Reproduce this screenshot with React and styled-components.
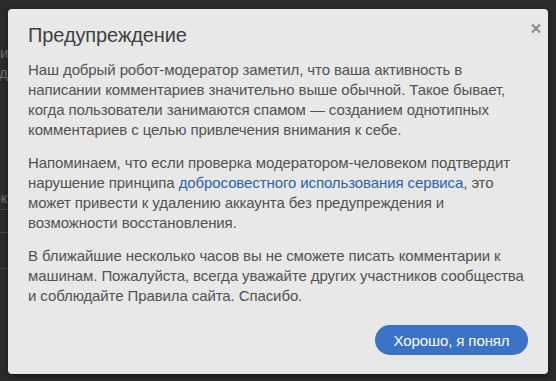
import React from 'react'
import styled, { createGlobalStyle } from 'styled-components'

const GlobalStyle = createGlobalStyle`
    html, body {
        margin: 0;
        padding: 0;
        width: 556px;
        height: 381px;
        overflow: hidden;
        background: #2b2b2b;
        font-family: 'Liberation Sans', Arial, sans-serif;
    }
`;

const Page = styled.div`
    position: relative;
    width: 556px;
    height: 381px;
`;

const Behind = styled.div`
    display: flex;
    flex-direction: column;
    width: 40px;
    margin-left: -24px;
    padding-top: 43px;
`;

const BgText = styled.div`
    margin-top: ${p => p.$gap || 0}px;
    height: 20px;
    line-height: 20px;
    font-size: 15px;
    color: #707070;
    white-space: nowrap;
    text-align: right;
    overflow: hidden;
    direction: rtl;
`;

const BgRule = styled.div`
    margin-top: ${p => p.$gap || 0}px;
    height: 1px;
    background: #474747;
`;

const Overlay = styled.div`
    position: absolute;
    inset: 0;
    display: flex;
    align-items: flex-start;
    padding: 9px 8px 0 8px;
`;

const Modal = styled.div`
    position: relative;
    width: 540px;
    box-sizing: border-box;
    padding: 14px 18px 19px 20px;
    background: #e8e8e8;
    border-radius: 4px;
    box-shadow: 0 2px 6px rgba(0, 0, 0, 0.45);
    display: flex;
    flex-direction: column;
`;

const Close = styled.button`
    position: absolute;
    top: 12px;
    right: 4px;
    width: 16px;
    height: 14px;
    padding: 0;
    border: none;
    background: none;
    display: flex;
    align-items: center;
    justify-content: center;
    cursor: pointer;
`;

const Title = styled.h2`
    margin: 0 0 13px 0;
    font-size: 20px;
    line-height: 24px;
    font-weight: normal;
    letter-spacing: -0.1px;
    color: #3f3f3f;
`;

const Text = styled.p`
    margin: 0 0 13px 0;
    font-size: 15px;
    line-height: 20px;
    letter-spacing: -0.1px;
    color: #525252;

    &:last-of-type {
        margin-bottom: 19px;
    }
`;

const Link = styled.a`
    color: #2f62ad;
    text-decoration: none;
`;

const Footer = styled.div`
    display: flex;
    justify-content: flex-end;
    padding-right: 2px;
`;

const Button = styled.button`
    height: 30px;
    width: 153px;
    padding: 0;
    border: none;
    border-radius: 15px;
    background: #3a72c6;
    color: #ffffff;
    font-family: 'Liberation Sans', Arial, sans-serif;
    font-size: 15px;
    letter-spacing: -0.1px;
    cursor: pointer;
`;

const CloseIcon = () => (
    <svg width="10" height="9" viewBox="0 0 10 9">
        <path d="M1 0.5 L9 8.5 M9 0.5 L1 8.5" stroke="#8c8c8c" strokeWidth="2.2" />
    </svg>
)

const App = () => {
  return (
    <Page>
        <GlobalStyle />
        <Behind>
            <BgText>Сообщения ис</BgText>
            <BgText>и да</BgText>
            <BgText $gap={70}>к</BgText>
            <BgText $gap={15}>Марка</BgText>
            <BgRule $gap={1} />
            <BgRule $gap={22} />
            <BgRule $gap={35} />
            <BgText $gap={22}>н</BgText>
        </Behind>
        <Overlay>
            <Modal>
                <Close aria-label="Закрыть"><CloseIcon /></Close>
                <Title>Предупреждение</Title>
                <Text>
                    Наш добрый робот-модератор заметил, что ваша активность в написании комментариев значительно выше обычной. Такое бывает, когда пользователи занимаются спамом — созданием однотипных комментариев с целью привлечения внимания к себе.
                </Text>
                <Text>
                    Напоминаем, что если проверка модератором-человеком подтвердит нарушение принципа <Link href="#">добросовестного использования сервиса</Link>, это может привести к удалению аккаунта без предупреждения и возможности восстановления.
                </Text>
                <Text>
                    В ближайшие несколько часов вы не сможете писать комментарии к машинам. Пожалуйста, всегда уважайте других участников сообщества и соблюдайте Правила сайта. Спасибо.
                </Text>
                <Footer>
                    <Button>Хорошо, я понял</Button>
                </Footer>
            </Modal>
        </Overlay>
    </Page>
  )
}

export default App
